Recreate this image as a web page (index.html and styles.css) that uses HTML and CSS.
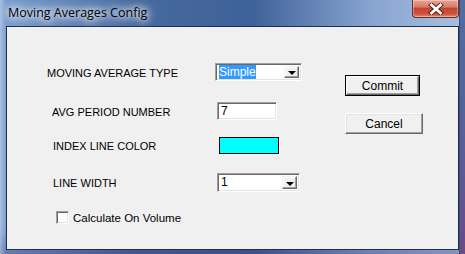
FILE: index.html
```html
<!DOCTYPE html>
<html lang="en">
<head>
    <meta charset="UTF-8">
    <title>Moving Averages Config</title>
    <link rel="stylesheet" href="styles.css">
</head>
<body>
    <div class="window">
        <div class="titlebar">
            <span class="title">Moving Averages Config</span>
            <div class="close">
                <svg width="16" height="12" viewBox="0 0 16 12">
                    <path d="M3.5 2 L12.5 10 M12.5 2 L3.5 10" stroke="#5a1a12" stroke-width="4.6" stroke-linecap="square"/>
                    <path d="M3.5 2 L12.5 10 M12.5 2 L3.5 10" stroke="#ffffff" stroke-width="2.8" stroke-linecap="square"/>
                </svg>
            </div>
        </div>
        <div class="client">
            <div class="form">
                <div class="row row-type">
                    <label class="label">MOVING AVERAGE TYPE</label>
                    <div class="combo combo-type sunken">
                        <span class="combo-text"><span class="selected">Simple</span></span>
                        <span class="drop"><span class="arrow"></span></span>
                    </div>
                </div>
                <div class="row row-period">
                    <label class="label">AVG PERIOD NUMBER</label>
                    <div class="textbox sunken">7</div>
                </div>
                <div class="row row-color">
                    <label class="label">INDEX LINE COLOR</label>
                    <div class="swatch"></div>
                </div>
                <div class="row row-width">
                    <label class="label">LINE WIDTH</label>
                    <div class="combo combo-width sunken">
                        <span class="combo-text">1</span>
                        <span class="drop"><span class="arrow"></span></span>
                    </div>
                </div>
                <div class="check-row">
                    <span class="checkbox sunken"></span>
                    <span class="check-label">Calculate On Volume</span>
                </div>
            </div>
            <div class="actions">
                <div class="btn btn-default"><span>Commit</span></div>
                <div class="btn btn-cancel"><span>Cancel</span></div>
            </div>
        </div>
    </div>
</body>
</html>
```

FILE: styles.css
```css
body {
    margin: 0;
    width: 465px;
    height: 254px;
    overflow: hidden;
    font-family: "Liberation Sans", Arial, sans-serif;
    font-size: 11px;
    color: #000;
    background: linear-gradient(180deg, #4e6f9f 0%, #5a5d98 60%, #6b4a86 100%);
}
.window {
    width: 460px;
    height: 254px;
    box-sizing: border-box;
    background:
        linear-gradient(90deg, rgba(255,255,255,0.35) 0px, rgba(255,255,255,0) 6px),
        linear-gradient(180deg, rgba(0,0,0,0) 0%, rgba(0,0,0,0) 90%, rgba(40,40,100,0.3) 100%),
        linear-gradient(90deg, #7b9fd0 0%, #46699f 30%, #3f6199 55%, #86a3cf 80%, #a7bedf 100%);
    border-right: 1px solid #3b4a7a;
}
.titlebar {
    display: flex;
    align-items: flex-start;
    height: 26px;
}
.title {
    padding: 5px 0 0 8px;
    font-family: "Open Sans", "Noto Sans", sans-serif;
    font-size: 12.5px;
    line-height: 16px;
    color: #000;
    text-shadow: 0 0 6px #fff, 0 0 10px #fff, 0 0 14px #fff;
}
.close {
    margin-left: auto;
    width: 45px;
    height: 17px;
    display: flex;
    align-items: center;
    justify-content: center;
    border: 1px solid #6e2d25;
    border-top: none;
    border-radius: 0 0 4px 4px;
    background: linear-gradient(180deg, #e9a596 0%, #d77c68 40%, #c4462f 50%, #c9503a 80%, #e08b6d 100%);
    box-shadow: inset 0 0 0 1px rgba(255,255,255,0.35);
}
.client {
    display: flex;
    margin-left: 6px;
    width: 453px;
    height: 224px;
    box-sizing: border-box;
    border: 1px solid #1f2f4f;
    background: #f0f0f0;
}
.form {
    display: flex;
    flex-direction: column;
    width: 338px;
    padding-top: 36px;
}
.row {
    display: grid;
    grid-template-columns: 208px auto;
    align-items: center;
}
.label {
    padding-left: 46px;
    padding-top: 1px;
    white-space: nowrap;
}
.row-type .label {
    padding-left: 40px;
}
.row-period { margin-top: 21px; }
.row-color { margin-top: 17px; }
.row-width { margin-top: 19px; }
.row-period .label { padding-left: 45px; }

.sunken {
    box-sizing: border-box;
    border: 1px solid;
    border-color: #a0a0a0 #ffffff #ffffff #a0a0a0;
    box-shadow: inset 1px 1px #696969, inset -1px -1px #e3e3e3;
    background: #fff;
}
.combo {
    display: flex;
    align-items: center;
    padding: 2px;
}
.combo-type {
    width: 87px;
    height: 18px;
}
.combo-width {
    width: 83px;
    height: 19px;
    margin-left: 2px;
}
.combo-text {
    flex: 1;
    padding-left: 1px;
    font-size: 12px;
    line-height: 13px;
}
.selected {
    background: #3399ff;
    color: #fff;
}
.drop {
    width: 15px;
    height: 100%;
    box-sizing: border-box;
    display: flex;
    align-items: center;
    justify-content: center;
    border: 1px solid;
    border-color: #f0f0f0 #696969 #696969 #f0f0f0;
    box-shadow: inset -1px -1px #a0a0a0, inset 1px 1px #fff;
    background: #f0f0f0;
}
.arrow {
    width: 0;
    height: 0;
    border-left: 4px solid transparent;
    border-right: 4px solid transparent;
    border-top: 4px solid #000;
    margin-top: 2px;
}
.textbox {
    width: 60px;
    height: 18px;
    margin-left: 2px;
    padding: 1px 3px;
    font-size: 12px;
    line-height: 14px;
}
.swatch {
    width: 60px;
    height: 17px;
    margin-left: 4px;
    box-sizing: border-box;
    border: 1px solid #000;
    background: #00ffff;
    box-shadow: 1px 1px #fff;
}
.check-row {
    display: flex;
    align-items: center;
    margin-top: 19px;
    padding-left: 49px;
}
.checkbox {
    width: 13px;
    height: 13px;
}
.check-label {
    margin-left: 4px;
    font-size: 11.5px;
}
.actions {
    display: flex;
    flex-direction: column;
    align-items: flex-start;
    padding-top: 48px;
    gap: 17px;
}
.btn {
    box-sizing: border-box;
    display: flex;
    align-items: center;
    justify-content: center;
    background: #f0f0f0;
    font-size: 12px;
}
.btn-default {
    width: 75px;
    height: 21px;
    border: 1px solid #000;
}
.btn-default span {
    display: flex;
    align-items: center;
    justify-content: center;
    width: 100%;
    height: 100%;
    box-sizing: border-box;
    border: 1px solid;
    border-color: #fff #696969 #696969 #fff;
    box-shadow: inset -1px -1px #a0a0a0;
}
.btn-cancel {
    width: 78px;
    height: 21px;
    border: 1px solid;
    border-color: #fff #696969 #696969 #fff;
    box-shadow: inset -1px -1px #a0a0a0, inset 1px 1px #e3e3e3;
}
```
